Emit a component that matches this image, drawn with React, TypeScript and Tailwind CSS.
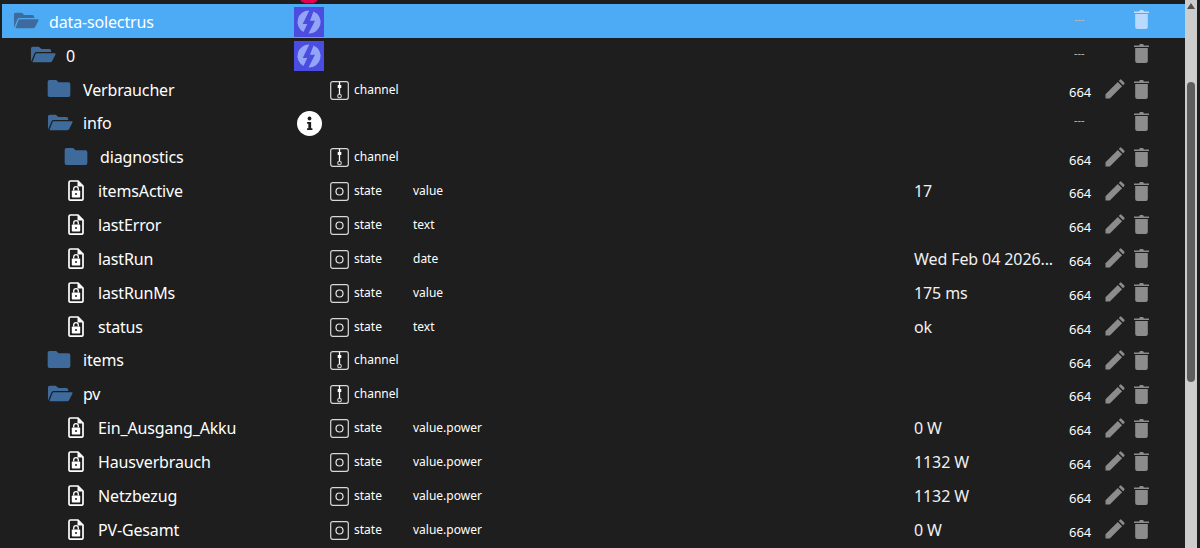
import React from "react";

const Folder = ({ open }: { open?: boolean }) =>
  open ? (
    <svg width="26" height="17" viewBox="0 0 27 20" preserveAspectRatio="none" className="shrink-0">
      <path d="M1 18V3q0-2 2-2h6l3 2.500h8q2 0 2 2V7H7q-1.600 0-2.300 1.500L1.300 18z" fill="#3f6b9c" />
      <path d="M7 8.500h18.500q1.500 0 1 1.500l-3.500 7.500q-.7 1.500-2.300 1.500H2.500l3-9q.4-1.500 1.500-1.500z" fill="#3f6b9c" />
    </svg>
  ) : (
    <svg width="24" height="17" viewBox="0 0 24 18" className="shrink-0">
      <path d="M0 2q0-2 2-2h7l2.500 2.500H22q2 0 2 2V16q0 2-2 2H2q-2 0-2-2z" fill="#3f6b9c" />
    </svg>
  );

const FileLock = () => (
  <svg width="16" height="21" viewBox="0 0 16 21" className="shrink-0">
    <path d="M2.500 1H10l5 5v13q0 1.200-1.500 1.200h-11Q1 20.200 1 19V2.500Q1 1 2.500 1z" fill="none" stroke="#fff" strokeWidth="1.700" />
    <path d="M9.500 1v5.500H15z" fill="#fff" />
    <rect x="3.800" y="10.500" width="8.400" height="7" rx="0.800" fill="#fff" />
    <path d="M5.700 10.500V9a2.300 2.300 0 0 1 4.600 0v1.500" fill="none" stroke="#fff" strokeWidth="1.300" />
    <circle cx="8" cy="14" r="1" fill="#1e1e1e" />
  </svg>
);

const Logo = () => (
  <svg width="30" height="30" viewBox="0 0 30 30" className="shrink-0">
    <rect width="30" height="30" fill="#4b4ce0" />
    <path d="M15.300 3.500A11.500 11.500 0 0 0 9.500 25.100L13.300 17H8.700z" fill="#93a5f7" />
    <path d="M19.500 4.400 16 13.700h5L14.500 26.500A11.500 11.500 0 0 0 19.500 4.400z" fill="#93a5f7" />
  </svg>
);

const Info = () => (
  <svg width="25" height="25" viewBox="0 0 26 26" className="shrink-0">
    <circle cx="13" cy="13" r="13" fill="#fff" />
    <circle cx="13" cy="7.800" r="2" fill="#1e1e1e" />
    <path d="M10.500 11.500h4.200V18h1.300v1.800h-5.500V18h1.300v-4.700h-1.300z" fill="#1e1e1e" />
  </svg>
);

const ChannelIcon = () => (
  <svg width="19" height="19" viewBox="0 0 19 19" className="shrink-0">
    <rect x="0.700" y="0.700" width="17.600" height="17.600" rx="2" fill="none" stroke="#d8d8d8" strokeWidth="1.200" />
    <path d="M9.500 1v12" stroke="#fff" strokeWidth="1.300" />
    <rect x="7.700" y="4" width="3.600" height="3" fill="#fff" />
    <circle cx="9.500" cy="15" r="1.800" fill="#1e1e1e" stroke="#d8d8d8" strokeWidth="1.100" />
  </svg>
);

const StateIcon = () => (
  <svg width="19" height="19" viewBox="0 0 19 19" className="shrink-0">
    <rect x="0.700" y="0.700" width="17.600" height="17.600" rx="2" fill="none" stroke="#d8d8d8" strokeWidth="1.200" />
    <circle cx="9.500" cy="9.500" r="3.500" fill="none" stroke="#e8e8e8" strokeWidth="1.200" />
  </svg>
);

const Pencil = () => (
  <svg width="20" height="20" viewBox="0 0 20 20" className="shrink-0">
    <path d="M0.500 19.500v-4.300L12.800 2.900l4.300 4.300L4.800 19.500z" fill="#8c8c8c" />
    <path d="M13.800 1.900 15 .7q.7-.7 1.400 0l2.900 2.900q.7.7 0 1.400l-1.200 1.200z" fill="#8c8c8c" />
  </svg>
);

const Trash = ({ light }: { light?: boolean }) => (
  <svg width="15" height="20" viewBox="0 0 15 20" className="shrink-0">
    <path d="M0 2.500h5L6 1h3l1 1.500h5V4H0z" fill={light ? "#c3defb" : "#8c8c8c"} />
    <path d="M1.200 5h12.600v13q0 2-2 2H3.200q-2 0-2-2z" fill={light ? "#b9daff" : "#8c8c8c"} />
  </svg>
);

type R = {
  name: string;
  indent: number;
  icon: "open" | "folder" | "file";
  kind?: "logo" | "info" | "channel" | "state";
  role?: string;
  value?: string;
  acl: string;
  selected?: boolean;
};

const rows: R[] = [
  { name: "data-solectrus", indent: 11, icon: "open", kind: "logo", acl: "---", selected: true },
  { name: "0", indent: 28, icon: "open", kind: "logo", acl: "---" },
  { name: "Verbraucher", indent: 45, icon: "folder", kind: "channel", acl: "664" },
  { name: "info", indent: 45, icon: "open", kind: "info", acl: "---" },
  { name: "diagnostics", indent: 62, icon: "folder", kind: "channel", acl: "664" },
  { name: "itemsActive", indent: 66, icon: "file", kind: "state", role: "value", value: "17", acl: "664" },
  { name: "lastError", indent: 66, icon: "file", kind: "state", role: "text", acl: "664" },
  { name: "lastRun", indent: 66, icon: "file", kind: "state", role: "date", value: "Wed Feb 04 2026...", acl: "664" },
  { name: "lastRunMs", indent: 66, icon: "file", kind: "state", role: "value", value: "175 ms", acl: "664" },
  { name: "status", indent: 66, icon: "file", kind: "state", role: "text", value: "ok", acl: "664" },
  { name: "items", indent: 45, icon: "folder", kind: "channel", acl: "664" },
  { name: "pv", indent: 45, icon: "open", kind: "channel", acl: "664" },
  { name: "Ein_Ausgang_Akku", indent: 66, icon: "file", kind: "state", role: "value.power", value: "0 W", acl: "664" },
  { name: "Hausverbrauch", indent: 66, icon: "file", kind: "state", role: "value.power", value: "1132 W", acl: "664" },
  { name: "Netzbezug", indent: 66, icon: "file", kind: "state", role: "value.power", value: "1132 W", acl: "664" },
  { name: "PV-Gesamt", indent: 66, icon: "file", kind: "state", role: "value.power", value: "0 W", acl: "664" },
];

function Row({ r }: { r: R }) {
  const isFile = r.icon === "file";
  const noAcl = r.acl === "---";
  return (
    <div className={`flex h-[33.85px] items-center ${r.selected ? "bg-[#4dabf5]" : ""}`}>
      <div className="flex w-[292px] shrink-0 items-center" style={{ paddingLeft: r.indent }}>
        <div className={`${isFile ? "w-[30px] mt-[1px]" : "w-[36px]"} flex shrink-0 items-center`}>
          {r.icon === "open" && <Folder open />}
          {r.icon === "folder" && <Folder />}
          {r.icon === "file" && <FileLock />}
        </div>
        <span className="mt-[2px] text-[16px] tracking-[-0.15px] text-white">{r.name}</span>
      </div>
      <div className="mt-[2px] flex w-[36px] shrink-0 items-center">
        {r.kind === "logo" && <Logo />}
        {r.kind === "info" && <div className="pl-[3px]"><Info /></div>}
      </div>
      <div className="flex w-[83px] shrink-0 items-center gap-[5px] text-[12px] text-white">
        {r.kind === "channel" && <><div className="mt-[3px]"><ChannelIcon /></div><span className="mt-[2px]">channel</span></>}
        {r.kind === "state" && <><div className="mt-[3px]"><StateIcon /></div><span className="mt-[2px]">state</span></>}
      </div>
      <div className="mt-[2px] w-[501px] shrink-0 text-[12px] text-white">{r.role}</div>
      <div className="mt-[2px] w-[155px] shrink-0 whitespace-nowrap text-[16px] tracking-[-0.1px] text-[#f0f0f0]">{r.value}</div>
      <div className="flex flex-1 items-center">
        {noAcl ? (
          <span className="mb-[4px] w-[36px] pl-[5px] text-[11px] text-[#bbbbbb]">---</span>
        ) : (
          <span className="mt-[8px] w-[36px] text-[13px] text-white">{r.acl}</span>
        )}
        <div className="flex w-[24px] shrink-0 justify-start">{!noAcl && <div className="mt-[1px]"><Pencil /></div>}</div>
        <div className={`ml-[5px] ${noAcl ? "mb-[3px]" : "mt-[1px]"}`}><Trash light={r.selected} /></div>
      </div>
    </div>
  );
}

export default function App() {
  return (
    <div className="relative flex h-[548px] w-[1200px] overflow-hidden bg-[#1e1e1e] font-['Noto_Sans',sans-serif]">
      <div className="absolute left-[300px] top-[-7px] h-[10px] w-[18px] rounded-full bg-[#e6004c]" />
      <div className="w-[1185px] shrink-0 pl-[2px] pt-[4px]">
        {rows.map((r) => (
          <Row key={r.name} r={r} />
        ))}
      </div>
      <div className="flex w-[12px] flex-col items-start bg-[#cdcdcd] pl-[2px]">
        <svg width="8" height="6" viewBox="0 0 8 6" className="mt-[3px]"><path d="M4 0 8 6H0z" fill="#505050" /></svg>
        <div className="mt-[73px] h-[300px] w-[8px] rounded-full bg-[#5d5d5d]" />
      </div>
    </div>
  );
}
